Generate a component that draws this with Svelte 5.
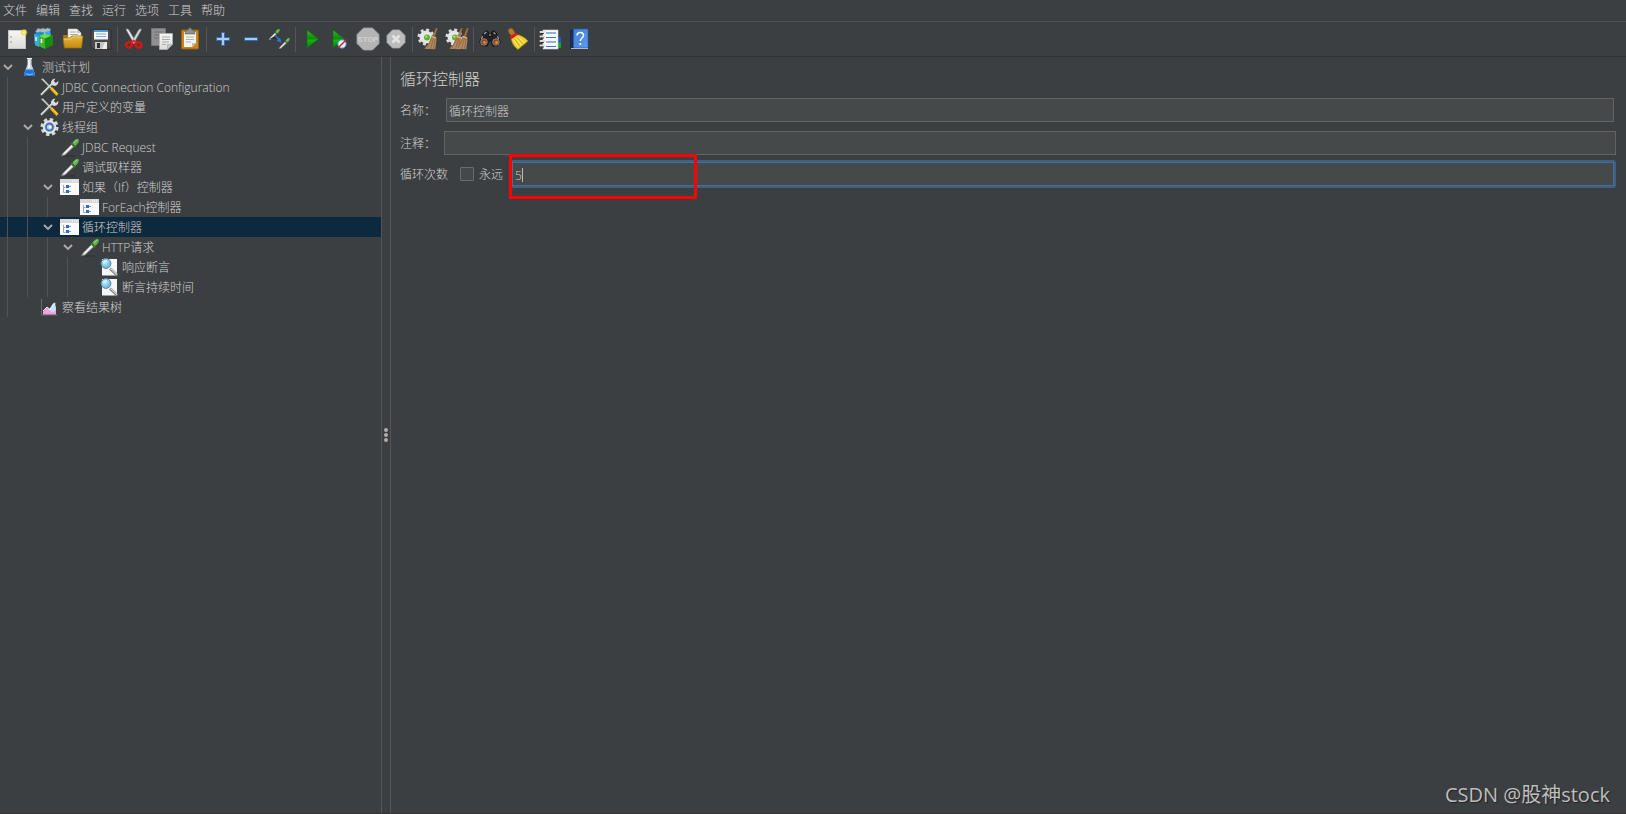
<script>
  const menus = ['文件', '编辑', '查找', '运行', '选项', '工具', '帮助'];

  const toolGroups = [
    [['new', '新建'], ['templates', '模板'], ['open', '打开'], ['save', '保存']],
    [['cut', '剪切'], ['copy', '复制'], ['paste', '粘贴']],
    [['plus', '全部展开'], ['minus', '全部折叠'], ['toggle', '切换']],
    [['start', '启动'], ['startNow', '不停顿启动'], ['stop', '停止'], ['shutdown', '关闭']],
    [['clear', '清除'], ['clearAll', '清除全部']],
    [['search', '查找'], ['reset', '重置查找']],
    [['functions', '函数助手'], ['help', '帮助']]
  ];

  const nodes = [
    { depth: 0, icon: 'flask', label: '测试计划', open: true },
    { depth: 1, icon: 'tools', label: 'JDBC Connection Configuration' },
    { depth: 1, icon: 'tools', label: '用户定义的变量' },
    { depth: 1, icon: 'gear', label: '线程组', open: true },
    { depth: 2, icon: 'pipette', label: 'JDBC Request' },
    { depth: 2, icon: 'pipette', label: '调试取样器' },
    { depth: 2, icon: 'controller', label: '如果（If）控制器', open: true },
    { depth: 3, icon: 'controller', label: 'ForEach控制器' },
    { depth: 2, icon: 'controller', label: '循环控制器', open: true },
    { depth: 3, icon: 'pipette', label: 'HTTP请求', open: true },
    { depth: 4, icon: 'assertion', label: '响应断言' },
    { depth: 4, icon: 'assertion', label: '断言持续时间' },
    { depth: 1, icon: 'chart', label: '察看结果树' }
  ];

  let selected = $state(8);
  let name = $state('循环控制器');
  let comment = $state('');
  let forever = $state(false);
  let loops = $state('5');
</script>

<svg class="defs" width="0" height="0" aria-hidden="true">
  <defs>
    <linearGradient id="gPlay" x1="0" y1="0" x2="0" y2="1">
      <stop offset="0" stop-color="#3fae2f" /><stop offset=".5" stop-color="#0a8a0a" /><stop offset=".55" stop-color="#12b80e" /><stop offset="1" stop-color="#0b7d0b" />
    </linearGradient>
    <linearGradient id="gFolder" x1="0" y1="0" x2="0" y2="1">
      <stop offset="0" stop-color="#e9b53a" /><stop offset="1" stop-color="#c48a10" />
    </linearGradient>
    <linearGradient id="gBlue" x1="0" y1="0" x2="1" y2="1">
      <stop offset="0" stop-color="#3f7fd6" /><stop offset="1" stop-color="#5c9bee" />
    </linearGradient>
    <linearGradient id="gPaper" x1="0" y1="0" x2="0" y2="1">
      <stop offset="0" stop-color="#f6f6f4" /><stop offset="1" stop-color="#dcdcda" />
    </linearGradient>
    <radialGradient id="gGlow">
      <stop offset="0" stop-color="#fffbd0" /><stop offset=".45" stop-color="#f2df4a" /><stop offset="1" stop-color="#e8d030" stop-opacity="0" />
    </radialGradient>
    <radialGradient id="gLens" cx=".4" cy=".35">
      <stop offset="0" stop-color="#d4f0fb" /><stop offset="1" stop-color="#74bfe6" />
    </radialGradient>
  </defs>
</svg>

{#snippet broom(dx)}
  <g transform={`translate(${dx} 0)`}>
    <path d="M19 1l1.4.6-2.6 8-1.8-.8z" fill="#a87b4c" stroke="#7a5530" stroke-width=".4" />
    <path d="M14.500 8.500l4.600 1.500.3 3.500-1.200 8.800-10.700-.6 4.200-5.200z" fill="#b58a5e" />
    <path d="M15 11l-5 10M16.500 11l-3 11M18 12l-1.500 10" stroke="#8a6238" stroke-width=".8" fill="none" />
    <path d="M14.600 9.500l4.500 1.500" stroke="#d9b68c" stroke-width="1" />
  </g>
{/snippet}

{#snippet cog()}
  <circle cx="9" cy="10" r="6.500" fill="#e6e6e6" />
  <circle cx="9" cy="10" r="7" fill="none" stroke="#dedede" stroke-width="3" stroke-dasharray="2.800 2.700" />
  <circle cx="10" cy="10.500" r="3" fill="#57b52e" />
  <circle cx="9.300" cy="9.600" r="1.200" fill="#a4e26c" />
{/snippet}

{#snippet dropper()}
  <path d="M1.500 18.800L3 16l8.500-8.500 2.300 2.200L5 18z" fill="#d9dcd8" stroke="#777" stroke-width=".7" />
  <path d="M4.500 16.200l7-7" stroke="#fff" stroke-width="1" />
  <path d="M10.300 6.600l1.300-1.100 4.300 4.200-1.300 1.200z" fill="#2f7a24" />
  <path d="M12.300 6.300c1-2.600 4-5.300 5.900-4.300 1.800 1.200-.3 5-3 7z" fill="#62b04a" />
  <path d="M14 5.800l3-2.800" stroke="#a6dc8c" stroke-width="1" />
{/snippet}

{#snippet toolIcon(kind)}
  <svg viewBox="0 0 24 24" width="24" height="24" aria-hidden="true">
    {#if kind === 'new'}
      <rect x="3.500" y="3.500" width="17" height="18" fill="url(#gPaper)" stroke="#c4c4c0" />
      <circle cx="6" cy="10" r=".8" fill="#888" /><circle cx="6" cy="15" r=".8" fill="#888" />
      <circle cx="19" cy="5.500" r="4" fill="url(#gGlow)" />
    {:else if kind === 'templates'}
      <path d="M2.500 5l2-3.500 4 .500 1-1 3 1 2-1 3 1-1 4-6 3z" fill="#aebbc0" stroke="#74878e" stroke-width=".6" />
      <path d="M1 7l6-2.500 4 1V21l-9-3z" fill="#1e8fd0" />
      <path d="M1 7l5 1.500V20l-4-2z" fill="#38a9e4" /><path d="M3 10v4" stroke="#e8f6ff" stroke-width="1.500" />
      <path d="M12 5l5-1 1 4-5 1z" fill="#29b4e8" />
      <path d="M6 9l5-2 9 2-9 3z" fill="#6edb4f" />
      <path d="M6 9l6 2.500V22l-6-3z" fill="#3eb52a" /><path d="M12 11.500L20 8v10l-8 4z" fill="#168c12" />
      <path d="M8.500 12v4" stroke="#ecffe6" stroke-width="1.600" />
    {:else if kind === 'open'}
      <path d="M2 8h5l2 2h11v10H3z" fill="#a8750e" />
      <path d="M7 2h9l4 4v9H7z" fill="#f4f4f4" stroke="#bdbdbd" stroke-width=".6" />
      <path d="M16 2v4h4z" fill="#c6c6c6" />
      <path d="M9 5h6M9 7.500h8" stroke="#999" stroke-width=".8" />
      <path d="M2 11h7l2-2h11l-1.500 12H3.500z" fill="url(#gFolder)" stroke="#9c6d0a" stroke-width=".7" />
      <path d="M3 12h7l2-2h9" stroke="#f8d77a" stroke-width=".8" fill="none" />
    {:else if kind === 'save'}
      <path d="M2 3h20v19H4l-2-2z" fill="#4a4a4a" stroke="#242424" stroke-width=".6" />
      <rect x="5" y="3" width="14" height="9.500" fill="#f2f6fa" />
      <path d="M5 3h14v2H5z" fill="#4c9ad6" />
      <path d="M7 7h10M7 9.500h10" stroke="#8ab0d4" stroke-width="1" />
      <rect x="6" y="15" width="12" height="7" fill="#c4c4c4" /><rect x="8" y="16" width="3" height="5" fill="#333" />
      <path d="M13 22l3-7h2v7z" fill="#eee" />
    {:else if kind === 'cut'}
      <path d="M4 2.500c1-1 2-.5 2.500 0L14 15l-2 1.500z" fill="#e6e9ea" stroke="#8d9294" stroke-width=".6" />
      <path d="M19.500 2.500c-1-1-2-.5-2.500 0L9.500 15l2 1.500z" fill="#d6dadb" stroke="#8d9294" stroke-width=".6" />
      <ellipse cx="7" cy="17.800" rx="3" ry="2.600" transform="rotate(-35 7 17.800)" fill="none" stroke="#d91414" stroke-width="2.400" />
      <ellipse cx="16.500" cy="17.800" rx="3" ry="2.600" transform="rotate(35 16.500 17.800)" fill="none" stroke="#d91414" stroke-width="2.400" />
      <path d="M9.500 15.500l2.300-1.700 2.300 1.700" stroke="#e42222" stroke-width="2" fill="none" />
    {:else if kind === 'copy'}
      <path d="M1.500 1.500h14v17h-14z" fill="#8f9090" stroke="#7c7d7d" stroke-width=".7" />
      <path d="M4 5h9M4 8h9M4 11h6" stroke="#727373" />
      <path d="M9.500 6.500h13v11l-5 5h-8z" fill="url(#gPaper)" stroke="#b4b4b4" stroke-width=".7" />
      <path d="M12 10h8M12 12.500h8M12 15h7M12 17.500h4" stroke="#a4a4a4" stroke-width=".9" />
      <path d="M22.500 17.500h-5v5z" fill="#c2c2c2" stroke="#999" stroke-width=".5" />
    {:else if kind === 'paste'}
      <rect x="3.500" y="3" width="17" height="19" rx="1" fill="#c98518" stroke="#93600e" />
      <path d="M6 5h12v11l-4 4H6z" fill="#f4f4f2" />
      <path d="M18 16h-4v4z" fill="#bcbcbc" />
      <path d="M8 10h8M8 12.500h8M8 15h5" stroke="#a8a8a8" stroke-width=".9" />
      <path d="M8 3h2l1-2h2l1 2h2l1 4H7z" fill="#8d9188" stroke="#555a52" stroke-width=".6" />
    {:else if kind === 'plus'}
      <path d="M10.500 5.500h3v5h5v3h-5v5h-3v-5h-5v-3h5z" fill="#a9cdf0" stroke="#2f6cb8" />
    {:else if kind === 'minus'}
      <path d="M5.500 10.500h13v3h-13z" fill="#a9cdf0" stroke="#2f6cb8" />
    {:else if kind === 'toggle'}
      <g transform="translate(1 1) scale(.62)">{@render dropper()}</g>
      <g transform="translate(11 10) scale(.62)">{@render dropper()}</g>
      <path d="M2.500 12h9l-3-3z" fill="#2c2e2f" />
      <path d="M8.500 9l4 4" stroke="#2d76dc" stroke-width="1.400" /><path d="M14.500 15.500l-1.500-5-3.500 3.500z" fill="#2d76dc" />
    {:else if kind === 'start'}
      <path d="M7 3l11.500 9L7 21z" fill="url(#gPlay)" stroke="#0b6c10" stroke-width=".5" />
    {:else if kind === 'startNow'}
      <path d="M5 3l11.500 9L5 21z" fill="url(#gPlay)" stroke="#0b6c10" stroke-width=".5" />
      <circle cx="14" cy="17" r="4.200" fill="#eaf2fb" stroke="#3f83cf" stroke-width="1" />
      <path d="M10 21l8.500-8.500" stroke="#d81c1c" stroke-width="1.400" />
    {:else if kind === 'stop'}
      <path d="M7.500 1h9L23 7.500v9L16.500 23h-9L1 16.500v-9z" fill="#b4b4b4" stroke="#a2a2a2" stroke-width=".8" />
      <text x="12" y="15" text-anchor="middle" font-family="Roboto, sans-serif" font-weight="700" font-size="8" fill="#d0d0d0">STOP</text>
    {:else if kind === 'shutdown'}
      <path d="M8.500 3h7L21 8.500v7L15.500 21h-7L3 15.500v-7z" fill="#bcbcbc" stroke="#a8a8a8" stroke-width=".8" />
      <path d="M8.500 8.500l7 7M15.500 8.500l-7 7" stroke="#e4e4e4" stroke-width="2.600" />
    {:else if kind === 'clear'}
      {@render cog()}
      {@render broom(0)}
    {:else if kind === 'clearAll'}
      {@render cog()}
      {@render broom(-3)}
      {@render broom(3)}
    {:else if kind === 'search'}
      <path d="M5.500 6l3-2.500 2.500 2v4h2v-4l2.500-2 3 2.500 4 9-3 4h-5l-1.500-5h-2l-1.500 5h-5l-3-4z" fill="#222" stroke="#0c0c0c" stroke-width=".6" />
      <path d="M6 7l2.500-2M15.500 5.500l2 1.500M11 8h2M3.500 12l1-3M20.500 12l-1-3" stroke="#a6a6a6" stroke-width="1.100" />
      <circle cx="6" cy="15" r="3.300" fill="#8e4a20" stroke="#909090" stroke-width=".8" />
      <circle cx="18" cy="15" r="3.300" fill="#8e4a20" stroke="#909090" stroke-width=".8" />
      <circle cx="6.500" cy="15.500" r="1.400" fill="#d88a4e" /><circle cx="18.500" cy="15.500" r="1.400" fill="#d88a4e" />
    {:else if kind === 'reset'}
      <path d="M3 2c2-1.500 4-.5 4.500 1L9.500 7 6 9.500 3 6C2 4.500 2 3 3 2z" fill="#b57a34" stroke="#7e4e18" stroke-width=".6" />
      <path d="M10.500 7.500c4 .5 9 3.500 11.500 6.500L12 22.500C8 20 6 16 5 11.500z" fill="#efd22e" stroke="#a98c0c" stroke-width=".7" />
      <path d="M4.500 11l6.500-4.500" stroke="#d42020" stroke-width="3" />
      <path d="M8 13l4.500 7M10.500 11.500l5 6.500M12.500 10.500l6 5.500" stroke="#fff08a" stroke-width="1" />
      <path d="M9 12.500l5 7M11.500 11l5.500 6" stroke="#b89a14" stroke-width=".7" />
    {:else if kind === 'functions'}
      <path d="M18 10h4v5h-4z" fill="#1459d0" /><path d="M18 15h4v6h-4z" fill="#14a02c" />
      <rect x="4" y="3" width="15" height="19" fill="#fafafa" stroke="#cfcfcf" stroke-width=".6" />
      <path d="M7 6h10M7 15h10" stroke="#2867c8" stroke-width="1.200" />
      <path d="M7 10.500h10M7 19.500h10" stroke="#3576d4" stroke-width="1.200" />
      <path d="M1.500 5h4M1.500 9.500h4M1.500 14h4M1.500 18.500h4" stroke="#dcdcdc" stroke-width="2" stroke-linecap="round" />
      <path d="M2 6.500h3M2 11h3M2 15.500h3M2 20h3" stroke="#222" stroke-width=".8" />
    {:else}
      <path d="M3 3l3-1v19l-3 1z" fill="#16294a" />
      <rect x="5" y="2" width="16" height="19" fill="url(#gBlue)" stroke="#2a5aa4" stroke-width=".7" />
      <path d="M5.500 2v19" stroke="#172f5a" stroke-width="2" />
      <path d="M4 21.500h17" stroke="#d0d8e4" stroke-width=".8" />
      <path d="M10 8.500c0-4 6.500-4 6.500 0 0 2.500-3.200 2.500-3.200 5.500" fill="none" stroke="#fff" stroke-width="1.500" />
      <circle cx="13.300" cy="17" r="1.100" fill="#fff" />
    {/if}
  </svg>
{/snippet}

{#snippet nodeIcon(kind)}
  <svg viewBox="0 0 20 20" width="20" height="20" aria-hidden="true">
    {#if kind === 'flask'}
      <path d="M7.500 1.500h4v6l3.300 9c.4 1.500-.3 2.500-1.600 2.500H5.800c-1.300 0-2-1-1.600-2.500l3.300-9z" fill="#c9d5e0" />
      <path d="M6 12.500h7l1.800 4c.4 1.500-.3 2.500-1.600 2.500H5.800c-1.300 0-2-1-1.600-2.500z" fill="#1f74dc" />
      <path d="M6 16.500c2 1.500 5 1.500 7 0" stroke="#6cb4fa" stroke-width="1.400" fill="none" />
      <path d="M7 1.500h5" stroke="#f4f6f8" stroke-width="1" /><path d="M9 3v8" stroke="#fff" stroke-width="1.500" />
    {:else if kind === 'tools'}
      <path d="M1 18l11-11" stroke="#8c9092" stroke-width="2.400" /><path d="M1 17.500l11-11" stroke="#dfe2e3" stroke-width="1.200" />
      <path d="M11.500 7.500c-1.500-3 1-6 4-6L13.800 4l2 2 2.400-2c.8 2.800-2 5.500-4.700 4.800z" fill="#d8dbdc" />
      <path d="M1 2l2-.5 8.500 9-1 1z" fill="#c8caca" />
      <path d="M11 11l6.500 7" stroke="#f0ae0a" stroke-width="3" /><path d="M11.500 10.800l6 6.200" stroke="#ffdf48" stroke-width="1" />
    {:else if kind === 'gear'}
      <circle cx="9.500" cy="10" r="7.600" fill="none" stroke="#d4d6d8" stroke-width="3" stroke-dasharray="3.400 2.570" />
      <circle cx="9.500" cy="10" r="6.800" fill="#e6e8ea" />
      <circle cx="9.500" cy="10" r="4.600" fill="#3c6eb4" stroke="#9cadc4" stroke-width=".8" />
      <circle cx="9.500" cy="10" r="2.600" fill="#b8d2ee" /><circle cx="10" cy="10" r="1.200" fill="#f6faff" />
    {:else if kind === 'pipette'}
      <path d="M3 19h12" stroke="#303233" stroke-width="1.200" />
      {@render dropper()}
    {:else if kind === 'controller'}
      <rect x="0" y="2" width="19" height="16" fill="#fbfbfb" /><rect x="0" y="2" width="19" height="4" fill="#d9d9d9" />
      <path d="M12 4h1M14 4h1M16 4h1" stroke="#fff" stroke-width="1" />
      <path d="M3.500 8v7.500h2M3.500 10.500h2" stroke="#a4a4a4" fill="none" />
      <rect x="6" y="8" width="3" height="3" fill="#2c6cc4" /><rect x="6" y="13" width="3" height="3" fill="#2c6cc4" />
      <path d="M9 9.500h2M9 14.500h2" stroke="#6a9cdc" stroke-width="1" />
    {:else if kind === 'assertion'}
      <path d="M2 2h15v16.500H2z" fill="#f6f6f6" />
      <path d="M10 11.500l7.500 7" stroke="#777" stroke-width="2.600" /><path d="M10.500 11.500l6.500 6" stroke="#d6d6d6" stroke-width="1.200" />
      <circle cx="6" cy="6.500" r="4.900" fill="url(#gLens)" stroke="#4d86ae" stroke-width="1" />
      <path d="M3.500 6c.5-1.500 2-2.500 3.500-2" stroke="#fff" fill="none" />
    {:else}
      <path d="M1.500 2v16h16" stroke="#6a6a6c" fill="none" />
      <path d="M3 17.500v-3l4-4 3 2 3-3h3v8z" fill="#f0a4d8" />
      <path d="M8 12.500c3 0 3-6 7-7l1 7-3 3z" fill="#bfe0fa" /><path d="M3 14l4-4 3 2.500 5-6" stroke="#f4f4fa" fill="none" />
    {/if}
  </svg>
{/snippet}

<div class="app">
  <nav class="menubar">
    {#each menus as item}
      <button class="menu">{item}</button>
    {/each}
  </nav>

  <div class="toolbar" role="toolbar" aria-label="工具">
    {#each toolGroups as group, i}
      {#if i > 0}<span class="sep"></span>{/if}
      {#each group as [kind, title]}
        <button class="tool" aria-label={title}>{@render toolIcon(kind)}</button>
      {/each}
    {/each}
  </div>

  <div class="body">
    <aside class="side">
      <ul class="tree" role="tree">
        {#each nodes as node, i}
          <li role="none">
            <button
              class="node"
              class:selected={selected === i}
              role="treeitem"
              aria-level={node.depth + 1}
              aria-selected={selected === i}
              aria-expanded={node.open}
              onclick={() => (selected = i)}
            >
              {#each { length: node.depth } as _}<span class="guide"></span>{/each}
              <span class="twist">
                {#if node.open}
                  <svg viewBox="0 0 10 8" width="10" height="8" aria-hidden="true">
                    <path d="M1 2l4 4 4-4" fill="none" stroke="#adadad" stroke-width="1.800" />
                  </svg>
                {/if}
              </span>
              {@render nodeIcon(node.icon)}
              <span class="label">{node.label}</span>
            </button>
          </li>
        {/each}
      </ul>
    </aside>

    <div class="splitter"><i></i><i></i><i></i></div>

    <main class="panel">
      <h1>循环控制器</h1>
      <div class="row name">
        <label for="name">名称：</label>
        <input id="name" type="text" bind:value={name} />
      </div>
      <div class="row comment">
        <label for="comment">注释：</label>
        <input id="comment" type="text" bind:value={comment} />
      </div>
      <div class="row loop">
        <label for="loops">循环次数</label>
        <span class="check">
          <input id="forever" type="checkbox" bind:checked={forever} />
          <label for="forever">永远</label>
        </span>
        <span class="field">
          <input id="loops" type="text" bind:value={loops} />
          <span class="caret"></span>
          <span class="mark"></span>
        </span>
      </div>
    </main>
  </div>

  <div class="credit">CSDN @股神stock</div>
</div>

<style>
  :global(body) {
    margin: 0;
    background: #3c3f41;
  }
  .defs {
    position: absolute;
  }
  .app {
    position: relative;
    display: flex;
    flex-direction: column;
    min-height: 100vh;
    box-sizing: border-box;
    overflow: hidden;
    border-bottom: 1px solid #3a3236;
    background: #3c3f41;
    color: #d0d0d0;
    font: 300 12px/20px 'Open Sans', 'Noto Sans CJK SC', sans-serif;
  }
  button,
  input {
    font: inherit;
    color: inherit;
    margin: 0;
    box-sizing: border-box;
  }
  button {
    padding: 0;
    border: 0;
    background: none;
  }
  svg {
    display: block;
    flex: none;
  }
  .menubar {
    display: flex;
    gap: 9px;
    height: 20px;
    padding: 1px 0 0 3px;
    border-bottom: 1px solid #515151;
  }
  .toolbar {
    display: flex;
    align-items: center;
    height: 34px;
    padding-left: 3px;
    border-bottom: 1px solid #323232;
  }
  .tool {
    display: flex;
    justify-content: center;
    width: 28px;
  }
  .sep {
    width: 1px;
    height: 25px;
    margin: 0 2px;
    background: #555;
  }
  .body {
    flex: 1;
    display: flex;
  }
  .side {
    width: 381px;
    flex: none;
  }
  .tree {
    list-style: none;
    margin: 0;
    padding: 0;
  }
  .node {
    display: flex;
    align-items: center;
    width: 100%;
    height: 20px;
    text-align: left;
    white-space: nowrap;
  }
  .node.selected {
    background: #0d293e;
  }
  .guide {
    width: 12px;
    height: 20px;
    margin-left: 7px;
    border-left: 1px solid #505355;
  }
  .twist {
    display: flex;
    justify-content: center;
    width: 16px;
    padding-right: 4px;
  }
  .label {
    padding: 2px 0 0 2px;
  }
  .splitter {
    display: flex;
    flex-direction: column;
    align-items: center;
    justify-content: center;
    gap: 1px;
    width: 8px;
    border: solid #555;
    border-width: 0 1px;
  }
  .splitter i {
    width: 4px;
    height: 4px;
    border-radius: 50%;
    background: #adadad;
  }
  .panel {
    flex: 1;
    min-width: 0;
    padding: 10px 10px 0 9px;
  }
  h1 {
    margin: 0 0 7px;
    font-size: 16px;
    line-height: 24px;
    font-weight: 300;
  }
  .row {
    display: flex;
    align-items: center;
  }
  .row label {
    flex: none;
    padding-top: 2px;
  }
  .name {
    padding-right: 2px;
    gap: 10px;
  }
  .comment {
    margin-top: 9px;
    gap: 8px;
  }
  .loop {
    margin-top: 5px;
    gap: 12px;
  }
  input[type='text'] {
    flex: 1;
    min-width: 0;
    width: 100%;
    height: 24px;
    padding: 2px 2px 0;
    border: 1px solid #646464;
    outline: 0;
    background: #45494a;
  }
  .check {
    display: flex;
    align-items: center;
    gap: 5px;
  }
  input[type='checkbox'] {
    appearance: none;
    width: 14px;
    height: 14px;
    border: 1px solid #6b6b6b;
    border-radius: 1px;
    background: #43494a;
  }
  .field {
    position: relative;
    flex: 1;
    display: flex;
    margin-left: -5px;
    border: 2px solid #3d6185;
    border-radius: 3px;
  }
  .field input[type='text'] {
    border-color: #466d94;
  }
  .caret {
    position: absolute;
    left: 10px;
    top: 6px;
    width: 1px;
    height: 14px;
    background: #bbb;
  }
  .mark {
    position: absolute;
    left: -3px;
    top: -8px;
    width: 182px;
    height: 39px;
    border: 3px solid #fe0000;
    border-radius: 1px;
  }
  .credit {
    position: absolute;
    right: 16px;
    bottom: 4px;
    font-size: 20px;
    line-height: 28px;
    font-weight: 400;
    font-family: 'Open Sans', 'Noto Sans CJK SC', sans-serif;
    color: #bdbebe;
    text-shadow: 1px 1px 1px #222;
  }
</style>
